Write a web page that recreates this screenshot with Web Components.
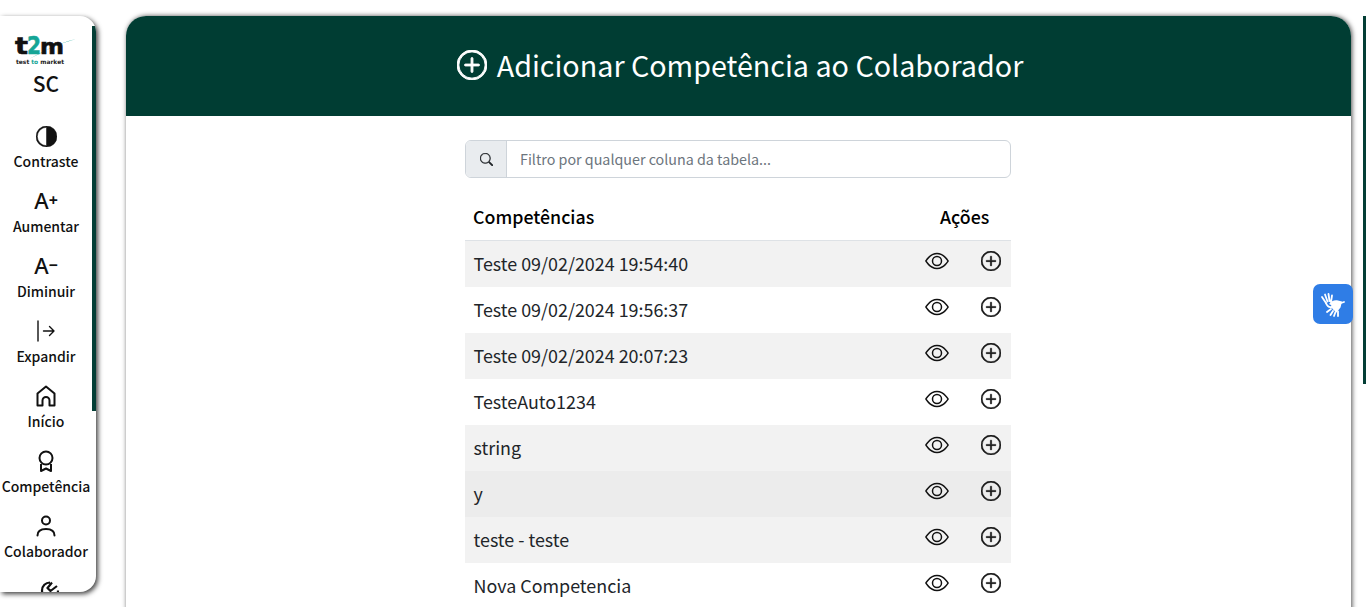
<!DOCTYPE html>
<html lang="pt-BR">
<head>
<meta charset="utf-8">
<title>Adicionar Competência ao Colaborador</title>
<style>
  html, body { margin: 0; height: 100%; overflow: hidden; background: #fff; }
  body { font-family: "Noto Sans CJK JP", "Noto Sans", sans-serif; color: #212529; }
</style>
</head>
<body>
<app-shell>
  <side-bar slot="side">
    <side-item label="Contraste"><svg viewBox="0 0 16 16" width="21" height="21" fill="currentColor" stroke="currentColor" stroke-width=".4" style="transform:scaleX(-1)"><path d="M8 15A7 7 0 1 0 8 1v14zm0 1A8 8 0 1 1 8 0a8 8 0 0 1 0 16z"/></svg></side-item>
    <side-item label="Aumentar"><font-glyph sign="+"></font-glyph></side-item>
    <side-item label="Diminuir"><font-glyph sign="−"></font-glyph></side-item>
    <side-item label="Expandir"><svg viewBox="0 0 20 22" width="20" height="22" fill="none" stroke="currentColor" stroke-width="1.4" stroke-linecap="round" stroke-linejoin="round"><path d="M2 1V21M7.500 11H18M13.500 6.500 18 11l-4.500 4.500"/></svg></side-item>
    <side-item label="Início"><svg viewBox="0 0 20 22" width="20" height="22" fill="none" stroke="currentColor" stroke-width="2" stroke-linejoin="round"><path d="M10 1.500 1.500 8.500v12h5v-5a3.500 3.500 0 0 1 7 0v5h5v-12z"/></svg></side-item>
    <side-item label="Competência"><svg viewBox="0 0 20 22" width="20" height="22" fill="none" stroke="currentColor" stroke-width="2" stroke-linejoin="round"><circle cx="10" cy="8" r="6.500"/><path d="M5 14v7l5-2.500 5 2.500v-7"/></svg></side-item>
    <side-item label="Colaborador"><svg viewBox="0 0 20 22" width="20" height="22" fill="none" stroke="currentColor" stroke-width="2" stroke-linecap="round"><circle cx="10" cy="5.500" r="4"/><path d="M1.500 20.500c0-4.500 3.500-6.500 8.500-6.500s8.500 2 8.500 6.500"/></svg></side-item>
    <side-item><svg viewBox="0 0 20 20" width="20" height="20" fill="none" stroke="currentColor" stroke-width="2.200" stroke-linejoin="round" style="transform:translateX(4px)"><path d="M10 1.500A8 8 0 1 0 18 9.500M12 1.500 7.500 7l3 3 6.500-5"/></svg></side-item>
  </side-bar>
  <main-panel title-text="Adicionar Competência ao Colaborador">
    <search-box placeholder="Filtro por qualquer coluna da tabela..."></search-box>
    <comp-table>
      <comp-row striped>Teste 09/02/2024 19:54:40</comp-row>
      <comp-row>Teste 09/02/2024 19:56:37</comp-row>
      <comp-row striped>Teste 09/02/2024 20:07:23</comp-row>
      <comp-row>TesteAuto1234</comp-row>
      <comp-row striped>string</comp-row>
      <comp-row hover>y</comp-row>
      <comp-row striped>teste - teste</comp-row>
      <comp-row>Nova Competencia</comp-row>
    </comp-table>
  </main-panel>
  <libras-button></libras-button>
</app-shell>

<script>
const PLUS_CIRCLE = `<path d="M8 15A7 7 0 1 1 8 1a7 7 0 0 1 0 14zm0 1A8 8 0 1 0 8 0a8 8 0 0 0 0 16z"/><path d="M8 4a.5.5 0 0 1 .5.5v3h3a.5.5 0 0 1 0 1h-3v3a.5.5 0 0 1-1 0v-3h-3a.5.5 0 0 1 0-1h3v-3A.5.5 0 0 1 8 4z"/>`;
const EYE = `<path d="M16 8s-3-5.5-8-5.5S0 8 0 8s3 5.5 8 5.5S16 8 16 8zM1.173 8a13.133 13.133 0 0 1 1.66-2.043C4.12 4.668 5.88 3.5 8 3.5c2.12 0 3.879 1.168 5.168 2.457A13.133 13.133 0 0 1 14.828 8c-.058.087-.122.183-.195.288-.335.48-.83 1.12-1.465 1.755C11.879 11.332 10.119 12.5 8 12.5c-2.12 0-3.879-1.168-5.168-2.457A13.134 13.134 0 0 1 1.172 8z"/><path d="M8 5.500a2.500 2.500 0 1 0 0 5 2.500 2.500 0 0 0 0-5zM4.500 8a3.500 3.500 0 1 1 7 0 3.500 3.500 0 0 1-7 0z"/>`;
const SEARCH = `<path d="M11.742 10.344a6.500 6.500 0 1 0-1.397 1.398h-.001c.03.04.062.078.098.115l3.850 3.850a1 1 0 0 0 1.415-1.414l-3.850-3.850a1.007 1.007 0 0 0-.115-.1zM12 6.500a5.500 5.500 0 1 1-11 0 5.500 5.500 0 0 1 11 0z"/>`;

class AppShell extends HTMLElement {
  constructor() {
    super();
    this.attachShadow({ mode: 'open' });
    this.shadowRoot.innerHTML = `
      <style>
        :host { display: flex; align-items: flex-start; height: 607px; overflow: hidden; position: relative; }
        .page-thumb { position: absolute; right: 0; top: 16px; width: 3px; height: 368px; background: #033e35; }
      </style>
      <slot name="side"></slot>
      <slot></slot>
      <div class="page-thumb"></div>`;
  }
}

class SideBar extends HTMLElement {
  constructor() {
    super();
    this.attachShadow({ mode: 'open' });
    this.shadowRoot.innerHTML = `
      <style>
        :host { display: block; flex: none; width: 96px; height: 576px; margin-top: 16px; background: #fff;
          border-radius: 0 16px 16px 0; box-shadow: 2px 2px 5px rgba(0,0,0,.75); position: relative; overflow: hidden; }
        .thumb { position: absolute; right: 0; top: 10px; width: 4px; height: 385px; background: #033e35; }
        .logo { display: flex; flex-direction: column; padding-top: 16px; margin-bottom: 20px; }
        .logo svg { display: block; margin-left: 14px; }
        svg text { font-family: "DejaVu Sans", sans-serif; font-weight: 700; }
        .who { width: 92px; text-align: center; font-size: 21px; font-weight: 500; line-height: 26px; margin-top: 2px; color: #111; height: 27px; }
      </style>
      <div class="thumb"></div>
      <div class="logo">
        <svg width="64" height="36" viewBox="0 0 64 36">
          <path d="M15 27Q40 13 62 7 44 11 27 21z" fill="#14a596"/>
          <text y="22" fill="#111" stroke="#111" stroke-width=".6" font-size="21"><tspan x="1" font-size="23" textLength="13" lengthAdjust="spacingAndGlyphs">t</tspan><tspan x="13" font-size="24" fill="#14a596" stroke="#14a596" textLength="14" lengthAdjust="spacingAndGlyphs">2</tspan><tspan x="26" textLength="24" lengthAdjust="spacingAndGlyphs">m</tspan></text>
          <text x="2" y="32" font-size="6" fill="#222" textLength="48" lengthAdjust="spacingAndGlyphs">test <tspan fill="#14a596">to</tspan> market</text>
        </svg>
        <div class="who">SC</div>
      </div>
      <slot></slot>`;
  }
}

class FontGlyph extends HTMLElement {
  constructor() {
    super();
    this.attachShadow({ mode: 'open' });
    this.shadowRoot.innerHTML = `
      <style>
        :host { display: flex; align-items: baseline; font-family: "Noto Sans", sans-serif; color: #111; line-height: 22px; }
        .a { font-size: 22px; font-weight: 500; }
        .s { font-size: 16px; font-weight: 700; position: relative; top: -3px; }
      </style>
      <span class="a">A</span><span class="s"></span>`;
  }
  connectedCallback() {
    this.shadowRoot.querySelector('.s').textContent = this.getAttribute('sign');
  }
}

class SideItem extends HTMLElement {
  constructor() {
    super();
    this.attachShadow({ mode: 'open' });
    this.shadowRoot.innerHTML = `
      <style>
        :host { display: flex; flex-direction: column; align-items: center; height: 65px; width: 92px; color: #111; }
        .icon { height: 24px; margin-top: 7px; display: flex; align-items: center; justify-content: center; }
        .label { font-size: 14px; line-height: 20px; margin-top: 3px; white-space: nowrap; font-weight: 500; }
      </style>
      <div class="icon"><slot></slot></div>
      <div class="label"></div>`;
  }
  connectedCallback() {
    this.shadowRoot.querySelector('.label').textContent = this.getAttribute('label') || '';
  }
}

class MainPanel extends HTMLElement {
  constructor() {
    super();
    this.attachShadow({ mode: 'open' });
    this.shadowRoot.innerHTML = `
      <style>
        :host { display: block; flex: none; width: 1225px; height: 700px; margin: 16px 0 0 30px; background: #fff;
          border-radius: 20px 20px 0 0; box-shadow: 1px 0 5px rgba(0,0,0,.7); }
        header { height: 100px; background: #003d33; color: #fff; border-radius: 20px 20px 0 0; box-sizing: border-box; padding: 0 0 2px 3px;
          display: flex; align-items: center; justify-content: center; gap: 10px; }
        header svg { flex: none; }
        h1 { margin: 0; font-size: 28.700px; font-weight: 400; line-height: 40px; }
        .body { width: 546px; margin: 24px 0 0 339px; }
      </style>
      <header>
        <svg width="30" height="30" viewBox="0 0 16 16" fill="currentColor" stroke="currentColor" stroke-width=".5">${PLUS_CIRCLE}</svg>
        <h1></h1>
      </header>
      <div class="body"><slot></slot></div>`;
  }
  connectedCallback() {
    this.shadowRoot.querySelector('h1').textContent = this.getAttribute('title-text');
  }
}

class SearchBox extends HTMLElement {
  constructor() {
    super();
    this.attachShadow({ mode: 'open' });
    this.shadowRoot.innerHTML = `
      <style>
        :host { display: flex; height: 38px; box-sizing: border-box; border: 1px solid #ced4da; border-radius: 6px; overflow: hidden; background: #fff; }
        .addon { width: 40px; flex: none; background: #e9ecef; border-right: 1px solid #ced4da; display: flex; align-items: center; justify-content: center; color: #212529; }
        input { flex: 1; min-width: 0; border: 0; outline: 0; padding: 0 13px; font: 14.300px/36px "Noto Sans CJK JP", sans-serif; color: #212529; background: transparent; }
        input::placeholder { color: #6c757d; opacity: 1; }
      </style>
      <div class="addon"><svg width="13" height="13" viewBox="0 0 16 16" fill="currentColor" stroke="currentColor" stroke-width=".4">${SEARCH}</svg></div>
      <input type="text">`;
  }
  connectedCallback() {
    this.shadowRoot.querySelector('input').placeholder = this.getAttribute('placeholder');
  }
}

class CompTable extends HTMLElement {
  constructor() {
    super();
    this.attachShadow({ mode: 'open' });
    this.shadowRoot.innerHTML = `
      <style>
        :host { display: block; margin-top: 17px; }
        .head { display: flex; align-items: center; height: 46px; border-bottom: 1px solid #dee2e6; font-size: 17.800px; font-weight: 500; color: #000; padding: 0 0 4px 8px; box-sizing: border-box; }
        .head span:first-child { flex: 1; }
        .head span:last-child { width: 71px; }
      </style>
      <div class="head"><span>Competências</span><span>Ações</span></div>
      <slot></slot>`;
  }
}

class CompRow extends HTMLElement {
  constructor() {
    super();
    this.attachShadow({ mode: 'open' });
    this.shadowRoot.innerHTML = `
      <style>
        :host { display: flex; height: 46px; background: #fff; color: #212529; font-size: 17.900px; }
        :host([striped]) { background: #f2f2f2; }
        :host([hover]) { background: #ececec; }
        .name { flex: 1; padding: 8px 0 0 8.500px; line-height: 28px; }
        .acts { display: flex; align-items: flex-start; flex: none; color: #111; }
        .eye { width: 24px; height: 24px; margin: 8px 32px 0 0; }
        .add { width: 20px; height: 20px; margin: 10px 10px 0 0; stroke: currentColor; stroke-width: .45; }
      </style>
      <div class="name"><slot></slot></div>
      <div class="acts">
        <svg class="eye" viewBox="0 0 16 16" fill="currentColor">${EYE}</svg>
        <svg class="add" viewBox="0 0 16 16" fill="currentColor">${PLUS_CIRCLE}</svg>
      </div>`;
  }
}

class LibrasButton extends HTMLElement {
  constructor() {
    super();
    this.attachShadow({ mode: 'open' });
    this.shadowRoot.innerHTML = `
      <style>
        :host { position: absolute; left: 1313px; top: 284px; width: 40px; height: 40px; border-radius: 7px; background: #2f7de6; display: flex; align-items: center; justify-content: center; }
      </style>
      <svg width="26" height="26" viewBox="0 0 26 26" fill="#fff" stroke="#fff" stroke-linecap="round">
        <g stroke-width="1.800" fill="none">
          <path d="M6 12 2 6M7.500 10.500 5 3.500M9.500 10 8.500 3M11 11 12 4.500"/>
          <path d="M6 12c1 3 3 4.500 5.500 4"/>
        </g>
        <path d="M9 13c2-3 6-4.500 9-3.500l4 1-1.500 6-4 5-4-3.500-1.500-4z" stroke="none"/>
        <g stroke-width="1.800" fill="none">
          <path d="M11 18 7 21M13 20 10.500 24M15.500 21 14 25M18 20.500 18 25"/>
          <path d="M21 12 24 11"/>
        </g>
      </svg>`;
  }
}

customElements.define('app-shell', AppShell);
customElements.define('side-bar', SideBar);
customElements.define('font-glyph', FontGlyph);
customElements.define('side-item', SideItem);
customElements.define('main-panel', MainPanel);
customElements.define('search-box', SearchBox);
customElements.define('comp-table', CompTable);
customElements.define('comp-row', CompRow);
customElements.define('libras-button', LibrasButton);
</script>
</body>
</html>
